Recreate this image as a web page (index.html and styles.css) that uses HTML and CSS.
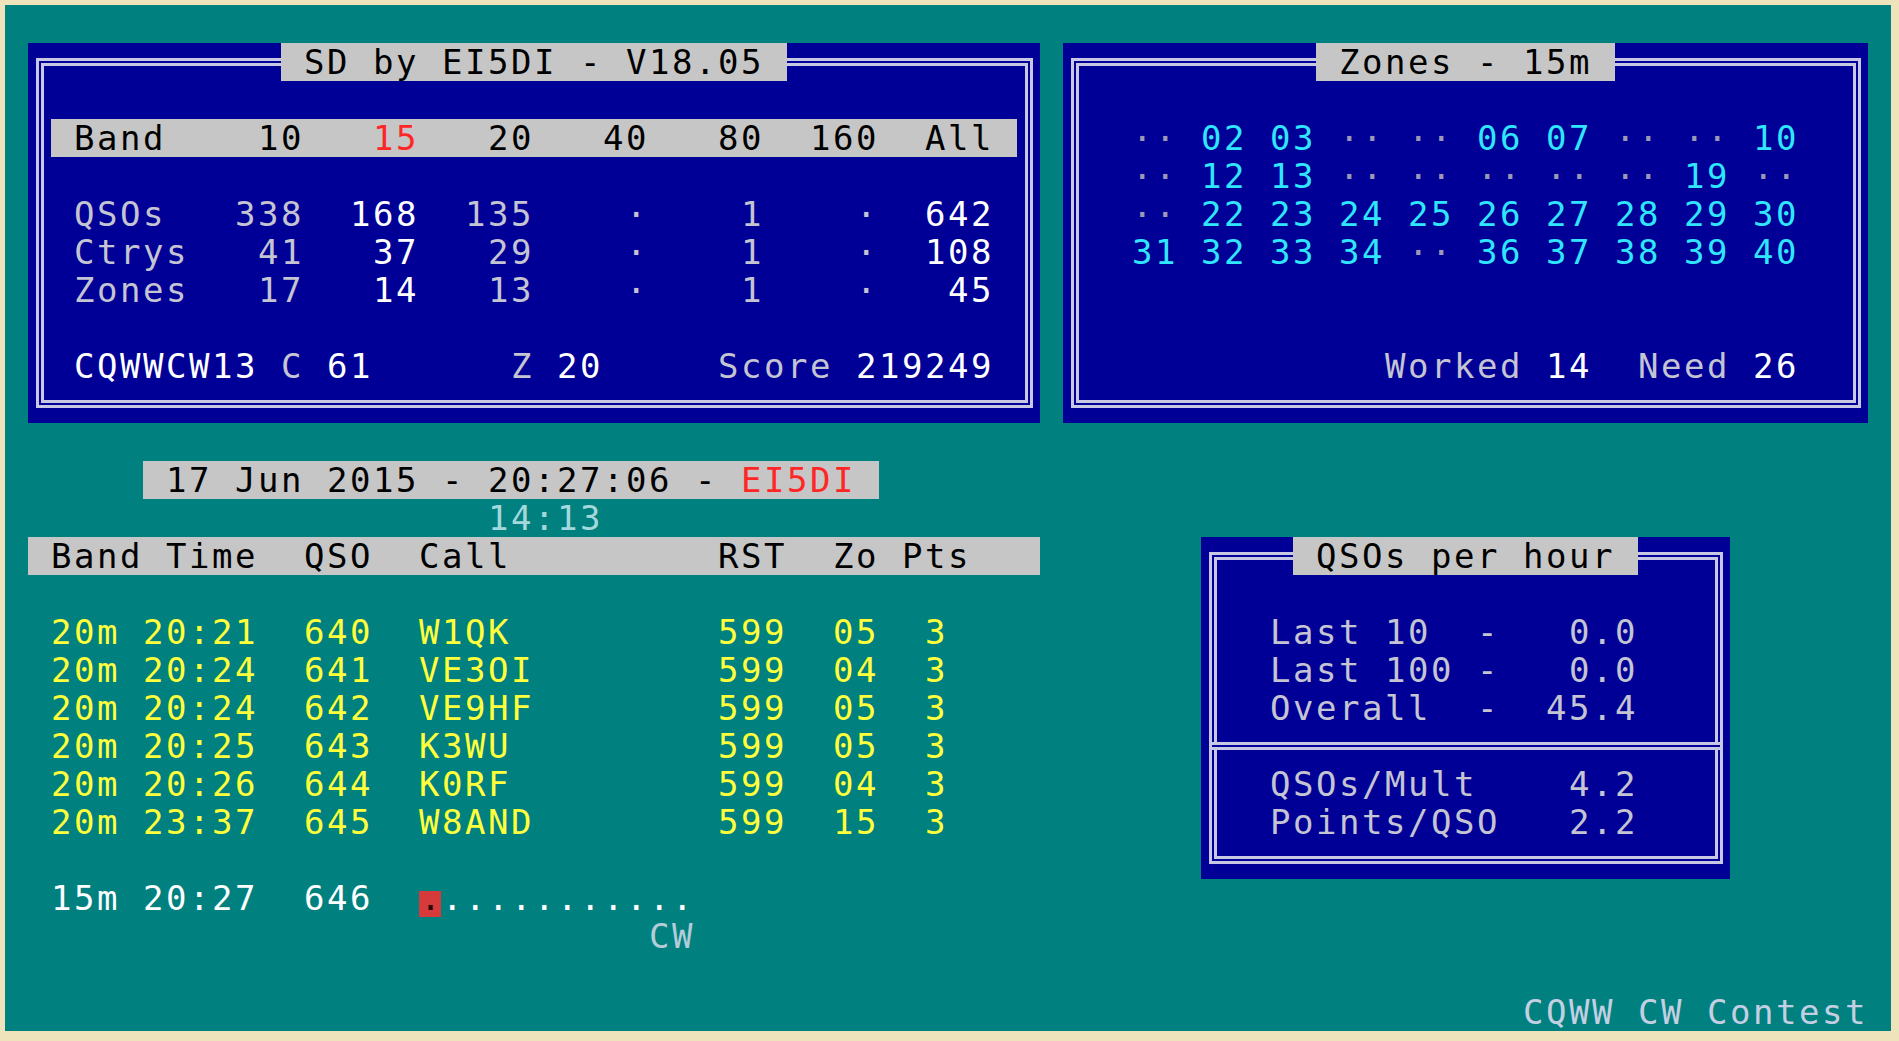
FILE: index.html
```html
<!DOCTYPE html>
<html>
<head>
<meta charset="utf-8">
<title>SD by EI5DI</title>
<link rel="stylesheet" href="styles.css">
</head>
<body>
<div class="screen">
  <div class="top">
    <section class="box box-main">
      <div class="frame">
        <div class="title"> SD by EI5DI - V18.05 </div>
        <div class="ln"></div>
        <div class="ln bar"> Band    10   <span class="red">15</span>   20   40   80  160  All </div>
        <div class="ln"></div>
        <div class="ln"> QSOs   338  <span class="w">168</span>  135    ·    1    ·  <span class="w">642</span> </div>
        <div class="ln"> Ctrys   41   <span class="w">37</span>   29    ·    1    ·  <span class="w">108</span> </div>
        <div class="ln"> Zones   17   <span class="w">14</span>   13    ·    1    ·   <span class="w">45</span> </div>
        <div class="ln"></div>
        <div class="ln"> <span class="w">CQWWCW13</span> C <span class="w">61</span>      Z <span class="w">20</span>     Score <span class="w">219249</span> </div>
      </div>
    </section>
    <section class="box box-zones">
      <div class="frame">
        <div class="title"> Zones - 15m </div>
        <div class="ln"></div>
        <div class="ln zl">  ·· <span class="c">02 03</span> ·· ·· <span class="c">06 07</span> ·· ·· <span class="c">10</span></div>
        <div class="ln zl">  ·· <span class="c">12 13</span> ·· ·· ·· ·· ·· <span class="c">19</span> ··</div>
        <div class="ln zl">  ·· <span class="c">22 23 24 25 26 27 28 29 30</span></div>
        <div class="ln zl">  <span class="c">31 32 33 34</span> ·· <span class="c">36 37 38 39 40</span></div>
        <div class="ln"></div>
        <div class="ln"></div>
        <div class="ln">             Worked <span class="w">14</span>  Need <span class="w">26</span></div>
      </div>
    </section>
  </div>

  <div class="lower">
    <div class="log">
      <div class="ln date"> 17 Jun 2015 - 20:27:06 - <span class="red">EI5DI</span> </div>
      <div class="ln elapsed">14:13</div>
      <div class="ln loghead"> Band Time  QSO  Call         RST  Zo Pts</div>
      <div class="ln"></div>
      <div class="ln qso">20m 20:21  640  W1QK         599  05  3</div>
      <div class="ln qso">20m 20:24  641  VE3OI        599  04  3</div>
      <div class="ln qso">20m 20:24  642  VE9HF        599  05  3</div>
      <div class="ln qso">20m 20:25  643  K3WU         599  05  3</div>
      <div class="ln qso">20m 20:26  644  K0RF         599  04  3</div>
      <div class="ln qso">20m 23:37  645  W8AND        599  15  3</div>
      <div class="ln"></div>
      <div class="ln entry">15m 20:27  646  <span class="cursor">.</span>...........</div>
      <div class="ln mode">                          CW</div>
    </div>
    <section class="box box-rate">
      <div class="frame">
        <div class="title"> QSOs per hour </div>
        <div class="ln"></div>
        <div class="ln">  Last 10  -   0.0</div>
        <div class="ln">  Last 100 -   0.0</div>
        <div class="ln">  Overall  -  45.4</div>
        <div class="sep"></div>
        <div class="ln">  QSOs/Mult    4.2</div>
        <div class="ln">  Points/QSO   2.2</div>
      </div>
    </section>
  </div>

  <div class="ln footer">CQWW CW Contest</div>
</div>
</body>
</html>
```

FILE: styles.css
```css
:root {
  --cw: 23px;
  --lh: 38px;
  --teal: #008180;
  --navy: #000096;
  --bar: #c6c6c6;
  --line: #c8c8e4;
  --dim: #c4c4d2;
}

* {
  box-sizing: border-box;
}

body {
  margin: 0;
  background: #eee3bb;
}

.screen {
  margin: 5px 0 0 5px;
  width: 1886px;
  height: 1026px;
  background: var(--teal);
  font-family: "DejaVu Sans Mono", monospace;
  font-size: 34px;
  letter-spacing: 2.53px;
  line-height: var(--lh);
  color: var(--dim);
  display: flex;
  flex-direction: column;
}

.ln {
  white-space: pre;
  height: var(--lh);
}

.top {
  display: flex;
  gap: var(--cw);
  margin-top: var(--lh);
  padding-left: var(--cw);
}

.box {
  background: var(--navy);
  padding: 15px 7.5px;
}

.box-main {
  width: calc(44 * var(--cw));
}

.box-zones {
  width: calc(35 * var(--cw));
}

.box-rate {
  width: calc(23 * var(--cw));
  margin-top: calc(2 * var(--lh));
  margin-left: calc(7 * var(--cw));
  align-self: flex-start;
}

.frame {
  border: 8px double var(--line);
  padding: 15px 7.5px;
}

.title {
  white-space: pre;
  width: fit-content;
  height: var(--lh);
  margin: calc(-1 * var(--lh)) auto 0;
  background: var(--bar);
  color: #000;
}

.bar {
  background: var(--bar);
  color: #000;
}

.red {
  color: #ff2626;
}

.w {
  color: #ffffff;
}

.c {
  color: #30e6ff;
}

.zl {
  color: #9a9ab8;
}

.sep {
  height: 8px;
  margin: 15px -12.5px;
  border-top: 3px solid var(--line);
  border-bottom: 3px solid var(--line);
  background: var(--navy);
}

.lower {
  display: flex;
  margin-top: var(--lh);
}

.log {
  width: calc(45 * var(--cw));
}

.date {
  margin-left: calc(6 * var(--cw));
  width: fit-content;
  background: var(--bar);
  color: #000;
}

.elapsed {
  margin-left: calc(21 * var(--cw));
  color: #a4d8dc;
}

.loghead {
  margin-left: var(--cw);
  width: calc(44 * var(--cw));
  background: var(--bar);
  color: #000;
}

.qso {
  padding-left: calc(2 * var(--cw));
  color: #ffff3c;
}

.entry {
  padding-left: calc(2 * var(--cw));
  color: #ffffff;
}

.cursor {
  display: inline-block;
  vertical-align: top;
  width: var(--cw);
  height: var(--lh);
  letter-spacing: 0;
  text-align: center;
  color: #2a0808;
  background: linear-gradient(#d63a3a, #d63a3a) 0 12px / 22px 27px no-repeat;
}

.mode {
  padding-left: calc(2 * var(--cw));
  color: #b4ccd8;
}

.footer {
  margin-top: auto;
  text-align: right;
  padding-right: var(--cw);
  color: #c4cfe2;
}
```
